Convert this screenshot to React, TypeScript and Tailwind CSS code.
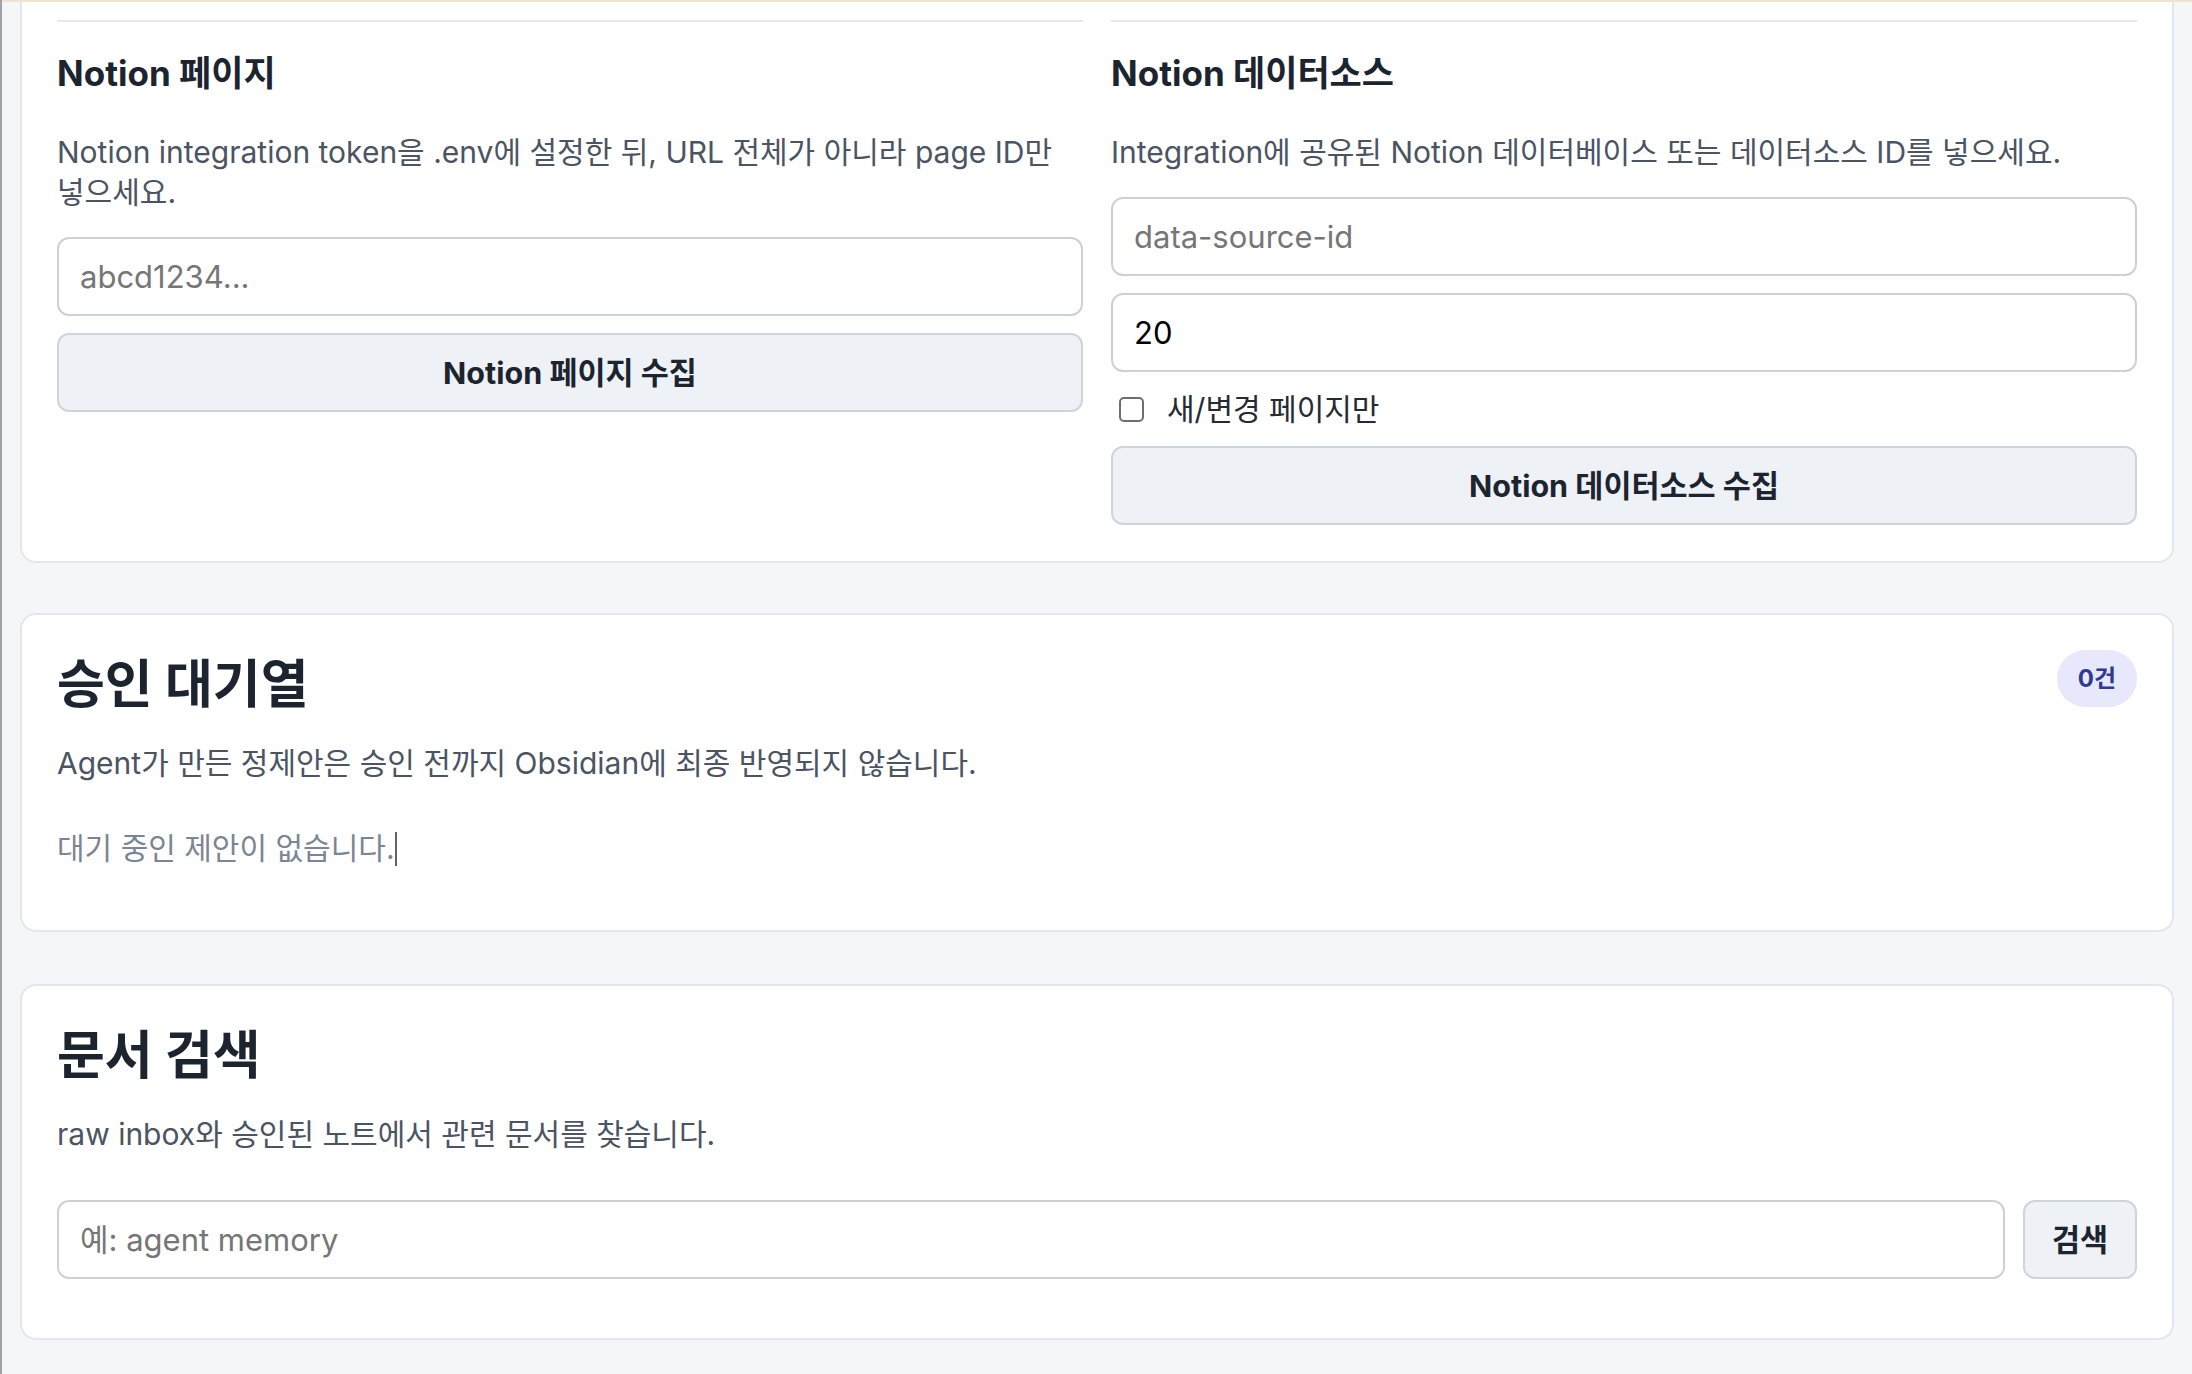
const inputCls =
    "h-[79px] w-full rounded-[12px] border-2 border-[#cdd0d7] bg-white px-[21px] text-[31px] text-black outline-none placeholder:text-[#767676]";
const buttonCls =
    "h-[79px] w-full rounded-[12px] border-2 border-[#cfd3da] bg-[#eef1f5] text-[30.5px] font-bold text-[#1c2430]";

function SourceColumn({ title, description, children }: { title: string; description: string; children: React.ReactNode }) {
    return (
        <div className="border-t-2 border-[#e7e9ed] pt-[29px]">
            <h3 className="text-[35px] leading-[44px] font-bold text-[#1c2430]">{title}</h3>
            <p className="mt-[37px] text-[30px] leading-[40px] break-keep text-[#4a5463]">{description}</p>
            <div className="mt-[25px] flex flex-col gap-[17px]">{children}</div>
        </div>
    );
}

function IngestCard() {
    return (
        <section className="grid grid-cols-2 gap-x-[28px] rounded-b-[16px] border-2 border-t-0 border-[#e1e7ef] bg-white px-[35px] pt-[18px] pb-[36px]">
            <SourceColumn title="Notion 페이지" description="Notion integration token을 .env에 설정한 뒤, URL 전체가 아니라 page ID만 넣으세요.">
                <input className={inputCls} placeholder="abcd1234..." />
                <button type="button" className={buttonCls}>
                    Notion 페이지 수집
                </button>
            </SourceColumn>
            <SourceColumn title="Notion 데이터소스" description="Integration에 공유된 Notion 데이터베이스 또는 데이터소스 ID를 넣으세요.">
                <input className={inputCls} placeholder="data-source-id" />
                <input className={inputCls} defaultValue="20" />
                <label className="flex h-[40px] items-center pl-[8px]">
                    <input type="checkbox" className="h-[25px] w-[25px] appearance-none rounded-[5px] border-2 border-[#6e6e6e] bg-white" />
                    <span className="ml-[23px] text-[30px] text-[#262b32]">새/변경 페이지만</span>
                </label>
                <button type="button" className={buttonCls}>
                    Notion 데이터소스 수집
                </button>
            </SourceColumn>
        </section>
    );
}

function QueueCard() {
    return (
        <section className="mt-[50px] rounded-[16px] border-2 border-[#e1e7ef] bg-white px-[35px] pt-[35px] pb-[62px]">
            <div className="flex items-start justify-between">
                <h2 className="pt-[5px] text-[52px] leading-[60px] font-bold text-[#1c2430]">승인 대기열</h2>
                <span className="flex h-[57px] items-center rounded-full bg-[#e7e8fb] px-[21px] text-[24px] font-bold text-[#2f3b8f]">0건</span>
            </div>
            <p className="mt-[28px] text-[30px] leading-[40px] text-[#4a5463]">Agent가 만든 정제안은 승인 전까지 Obsidian에 최종 반영되지 않습니다.</p>
            <p className="mt-[45px] text-[30px] leading-[40px] text-[#7b8595]">
                대기 중인 제안이 없습니다.
                <span className="inline-block h-[34px] w-[2px] bg-[#5b6472] align-[-7px]" />
            </p>
        </section>
    );
}

function SearchCard() {
    return (
        <section className="mt-[52px] rounded-[16px] border-2 border-[#e1e7ef] bg-white px-[35px] pt-[35px] pb-[59px]">
            <h2 className="pt-[5px] text-[52px] leading-[60px] font-bold text-[#1c2430]">문서 검색</h2>
            <p className="mt-[28px] text-[30px] leading-[40px] text-[#4a5463]">raw inbox와 승인된 노트에서 관련 문서를 찾습니다.</p>
            <div className="mt-[46px] flex gap-[18px]">
                <input className={`${inputCls} flex-1`} placeholder="예: agent memory" />
                <button type="button" className="h-[79px] w-[114px] shrink-0 rounded-[12px] border-2 border-[#cfd3da] bg-[#eef1f5] text-[30.5px] font-bold text-[#1c2430]">
                    검색
                </button>
            </div>
        </section>
    );
}

export default function App() {
    return (
        <div className="min-h-screen w-full border-l-2 border-[#a1a1aa] bg-[#f4f6f8] font-['Inter','Noto_Sans_CJK_KR',sans-serif]">
            <div className="h-[2px] bg-[#f1e4cc]" />
            <div className="px-[18px] pb-[34px]">
                <IngestCard />
                <QueueCard />
                <SearchCard />
            </div>
        </div>
    );
}
